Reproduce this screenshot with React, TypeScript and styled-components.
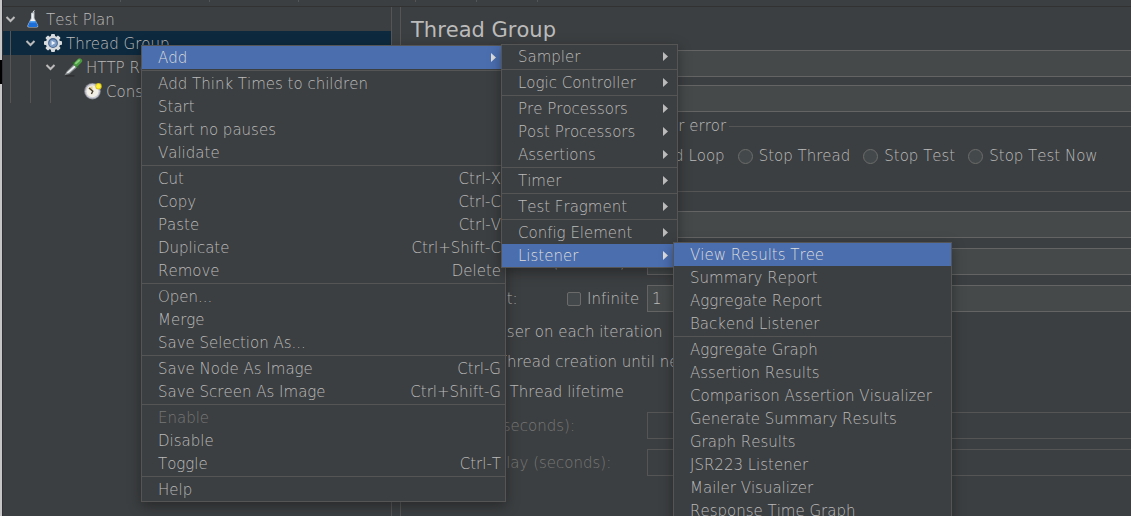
import React from 'react';
import styled, { createGlobalStyle, css } from 'styled-components';

const Global = createGlobalStyle`
  * { box-sizing: border-box; }
  body {
    margin: 0;
    background: #3c3f41;
    color: #bbbbbb;
    font-family: 'DejaVu Sans', sans-serif;
    font-weight: 200;
    font-size: 15px;
    line-height: 20px;
    font-kerning: none;
    font-variant-ligatures: none;
  }
  button, input { font: inherit; color: inherit; font-kerning: none; }
`;

const Page = styled.div`
  position: relative;
  display: flex;
  height: 100vh;
  overflow: hidden;
`;

const WindowEdge = styled.div`
  display: flex;
  flex-direction: column;
  flex: none;
  width: 3px;
  padding-top: 60px;
  background: #c6c6c6;
  border-right: 1px solid #2f3133;
`;

const EdgeMark = styled.span`
  height: 24px;
  background: #000000;
`;

const Frame = styled.div`
  flex: 1;
  min-width: 0;
  display: flex;
  flex-direction: column;
`;

const ToolBar = styled.div`
  display: flex;
  flex: none;
  height: 7px;
  border-bottom: 1px solid #323232;
`;

const ToolGap = styled.span<{ $width: number }>`
  width: ${(p) => p.$width}px;
  height: 2px;
  border-right: 1px solid #555555;
`;

const Split = styled.div`
  flex: 1;
  min-height: 0;
  display: flex;
`;

const TreePane = styled.nav`
  flex: none;
  width: 389px;
  border-right: 1px solid #555555;
`;

const TreeRow = styled.div<{ $selected?: boolean }>`
  display: flex;
  align-items: center;
  height: 24px;
  background: ${(p) => (p.$selected ? '#0d293e' : 'transparent')};
`;

const Guide = styled.span`
  width: 20px;
  height: 24px;
  padding-left: 7px;
  &::before {
    content: '';
    display: block;
    width: 1px;
    height: 24px;
    background: #555555;
  }
`;

const Cell = styled.span`
  display: flex;
  justify-content: center;
  width: 20px;
`;

const TreeLabel = styled.span`
  padding: 2px 0 0 3px;
  white-space: nowrap;
`;

const Editor = styled.main`
  flex: 1;
  min-width: 0;
  margin-left: 8px;
  padding: 9px 0 0 10px;
  border-left: 1px solid #555555;
  overflow: hidden;
`;

const Title = styled.h1`
  margin: 0;
  font-size: 21px;
  font-weight: 400;
  line-height: 28px;
`;

const Fields = styled.div`
  display: flex;
  flex-direction: column;
  gap: 8px;
  padding-top: 6px;
`;

const FieldRow = styled.label`
  display: flex;
  align-items: center;
  gap: 8px;
`;

const FieldName = styled.span<{ $width: number }>`
  flex: none;
  width: ${(p) => p.$width}px;
  white-space: nowrap;
`;

const TextInput = styled.input`
  flex: 1;
  min-width: 0;
  height: 27px;
  padding: 0 4px;
  background: #45494a;
  border: 1px solid #646464;
  border-right: 0;
  border-radius: 0;
  outline: none;
  &:disabled {
    background: #3c3f41;
    border-color: #555555;
  }
`;

const GroupTitle = styled.h2`
  display: flex;
  align-items: center;
  gap: 3px;
  margin: 0;
  padding-left: 14px;
  font-size: 15px;
  font-weight: 200;
  line-height: 20px;
  white-space: nowrap;
  &::after {
    content: '';
    flex: 1;
    height: 1px;
    background: #555555;
  }
`;

const ErrorGroup = styled.section`
  padding-top: 4px;
`;

const RadioRow = styled.div`
  display: flex;
  gap: 13px;
  padding: 10px 0 15px 16px;
`;

const Choice = styled.label`
  display: flex;
  align-items: center;
  gap: 6px;
  white-space: nowrap;
`;

const Radio = styled.input`
  appearance: none;
  width: 15px;
  height: 15px;
  margin: 0;
  border: 1px solid #6b6b6b;
  border-radius: 50%;
  background: #43494a;
`;

const Check = styled.input`
  appearance: none;
  width: 14px;
  height: 14px;
  margin: 0;
  border: 1px solid #6b6b6b;
  border-radius: 2px;
  background: #43494a;
`;

const Properties = styled.div`
  display: flex;
  flex-direction: column;
  gap: 10px;
  padding: 10px 0 0 16px;
`;

const PropRow = styled.div<{ $disabled?: boolean }>`
  display: flex;
  align-items: center;
  height: 27px;
  color: ${(p) => (p.$disabled ? '#777777' : 'inherit')};
`;

const PropName = styled.label<{ $width: number }>`
  flex: none;
  width: ${(p) => p.$width}px;
  white-space: nowrap;
`;

const CheckList = styled.div`
  display: flex;
  flex-direction: column;
  gap: 10px;
  padding-left: 3px;
`;

const LoopChoice = styled(Choice)`
  width: 80px;
`;

const menuSpot = {
  main: css`left: 141px; top: 45px; width: 365px;`,
  add: css`left: 501px; top: 44px; width: 177px;`,
  listener: css`left: 673px; top: 242px; width: 279px;`,
};

const MenuBox = styled.div<{ $spot: keyof typeof menuSpot }>`
  position: absolute;
  ${(p) => menuSpot[p.$spot]}
  background: #3c3f41;
  border: 1px solid #555555;
  box-shadow: 0 4px 12px rgba(0, 0, 0, 0.35);
`;

const MenuItem = styled.button<{ $active?: boolean }>`
  display: flex;
  align-items: center;
  justify-content: space-between;
  width: 100%;
  height: 23px;
  padding: 0 4px 0 16px;
  border: 0;
  text-align: left;
  white-space: nowrap;
  background: ${(p) => (p.$active ? '#4b6eaf' : 'transparent')};
  color: ${(p) => (p.$active ? '#dddddd' : '#bbbbbb')};
  &:disabled { color: #777777; }
`;

const Separator = styled.hr`
  height: 3px;
  margin: 0;
  border: solid transparent;
  border-width: 1px 0;
  background: #555555;
  background-clip: padding-box;
`;

const ArrowBox = styled.svg`
  width: 5px;
  height: 9px;
  margin-right: 5px;
`;

type Entry = { label: string; keys?: string; sub?: boolean; active?: boolean; disabled?: boolean } | null;

const mainMenu: Entry[] = [
  { label: 'Add', sub: true, active: true },
  null,
  { label: 'Add Think Times to children' },
  { label: 'Start' },
  { label: 'Start no pauses' },
  { label: 'Validate' },
  null,
  { label: 'Cut', keys: 'Ctrl-X' },
  { label: 'Copy', keys: 'Ctrl-C' },
  { label: 'Paste', keys: 'Ctrl-V' },
  { label: 'Duplicate', keys: 'Ctrl+Shift-C' },
  { label: 'Remove', keys: 'Delete' },
  null,
  { label: 'Open...' },
  { label: 'Merge' },
  { label: 'Save Selection As...' },
  null,
  { label: 'Save Node As Image', keys: 'Ctrl-G' },
  { label: 'Save Screen As Image', keys: 'Ctrl+Shift-G' },
  null,
  { label: 'Enable', disabled: true },
  { label: 'Disable' },
  { label: 'Toggle', keys: 'Ctrl-T' },
  null,
  { label: 'Help' },
];

const addMenu: Entry[] = [
  { label: 'Sampler', sub: true },
  null,
  { label: 'Logic Controller', sub: true },
  null,
  { label: 'Pre Processors', sub: true },
  { label: 'Post Processors', sub: true },
  { label: 'Assertions', sub: true },
  null,
  { label: 'Timer', sub: true },
  null,
  { label: 'Test Fragment', sub: true },
  null,
  { label: 'Config Element', sub: true },
  { label: 'Listener', sub: true, active: true },
];

const listenerMenu: Entry[] = [
  { label: 'View Results Tree', active: true },
  { label: 'Summary Report' },
  { label: 'Aggregate Report' },
  { label: 'Backend Listener' },
  null,
  { label: 'Aggregate Graph' },
  { label: 'Assertion Results' },
  { label: 'Comparison Assertion Visualizer' },
  { label: 'Generate Summary Results' },
  { label: 'Graph Results' },
  { label: 'JSR223 Listener' },
  { label: 'Mailer Visualizer' },
  { label: 'Response Time Graph' },
];

const Menu = ({ spot, entries }: { spot: keyof typeof menuSpot; entries: Entry[] }) => (
  <MenuBox $spot={spot} role="menu">
    {entries.map((e, i) =>
      e ? (
        <MenuItem key={i} type="button" role="menuitem" $active={e.active} disabled={e.disabled}>
          <span>{e.label}</span>
          {e.keys && <span>{e.keys}</span>}
          {e.sub && (
            <ArrowBox viewBox="0 0 5 9" aria-hidden="true">
              <path d="M0 0 L5 4.5 L0 9 Z" fill="currentColor" />
            </ArrowBox>
          )}
        </MenuItem>
      ) : (
        <Separator key={i} />
      ),
    )}
  </MenuBox>
);

const Chevron = () => (
  <Cell>
    <svg width="20" height="10" viewBox="0 0 20 10" aria-hidden="true">
      <path d="M3.5 3 L7.5 7 L11.5 3" fill="none" stroke="#bbbbbb" strokeWidth="2" />
    </svg>
  </Cell>
);

const Flask = () => (
  <svg width="20" height="20" viewBox="0 0 20 20" aria-hidden="true">
    <path d="M8 4 L11.5 2.5 V9 L15.2 16.5 Q15.7 18.5 13.7 18.5 H5.8 Q3.8 18.5 4.4 16.5 L8 9 Z" fill="#b4bcc4" />
    <path d="M8.8 4.5 H10.6 V9.5 L12.8 13 H6.8 L8.8 9.5 Z" fill="#f1f4f7" />
    <path d="M7 12 H12.6 L14.6 16.2 Q15 18 13.5 18 H6.2 Q4.6 18 5.2 16.2 Z" fill="#1c6fd8" />
    <path d="M7.2 12 H12.4 L13 13.4 H6.6 Z" fill="#5aa5f2" />
    <path d="M10 3 L11.4 1.4" stroke="#dfe3e6" strokeWidth="1" />
  </svg>
);

const Gear = () => (
  <svg width="20" height="20" viewBox="0 0 20 20" aria-hidden="true">
    <g fill="#d8dbde">
      {[0, 45, 90, 135].map((a) => (
        <rect key={a} x="8" y="1" width="4" height="18" rx="1" transform={`rotate(${a} 10 10)`} />
      ))}
      <circle cx="10" cy="10" r="7.2" />
    </g>
    <circle cx="10" cy="10" r="4.9" fill="#44648f" />
    <circle cx="10" cy="10.2" r="3.8" fill="#7d9dc6" />
    <path d="M8.6 7.8 L12.4 10 L8.6 12.2 Z" fill="#eef3f9" />
  </svg>
);

const Dropper = () => (
  <svg width="20" height="20" viewBox="0 0 20 20" aria-hidden="true">
    <path d="M3 18.8 H11" stroke="#2b2d2f" strokeWidth="1.2" strokeLinecap="round" />
    <path d="M1.5 18.2 L3.6 14.4 L11 7 L14.2 10.2 L6.4 17 Z" fill="#85898c" />
    <path d="M3.2 16.6 L4.8 14.6 L11.4 8.4 L12.8 9.8 L6 15.8 Z" fill="#eceff0" />
    <path d="M10.4 5.8 L15.2 10.6" stroke="#2c5a28" strokeWidth="2" strokeLinecap="round" />
    <path d="M13.4 7 L16.6 3.8" stroke="#4a9a42" strokeWidth="5" strokeLinecap="round" />
    <path d="M13 6.2 L16 3.4" stroke="#86cc7a" strokeWidth="2" strokeLinecap="round" />
  </svg>
);

const Clock = () => (
  <svg width="20" height="20" viewBox="0 0 20 20" aria-hidden="true">
    <circle cx="9.5" cy="10.2" r="8.3" fill="#85878f" />
    <circle cx="9.5" cy="10.2" r="7.4" fill="#c9c9d4" />
    <circle cx="9.5" cy="10.2" r="6" fill="#f2efe6" />
    <path d="M9.5 10.5 L5.5 7.5 A5 5 0 0 1 9.5 5.2 Z" fill="#e3cf8d" />
    <path d="M6 7 L9.8 10.2 L8.4 13" fill="none" stroke="#4a3f28" strokeWidth="1.4" />
    <circle cx="15.5" cy="5.2" r="3.2" fill="#d9c520" />
    <circle cx="15.5" cy="5.2" r="2.2" fill="#fff13a" />
  </svg>
);

export default function App() {
  return (
    <>
      <Global />
      <Page>
        <WindowEdge>
          <EdgeMark />
        </WindowEdge>
        <Frame>
          <ToolBar>
            <ToolGap $width={118} />
            <ToolGap $width={89} />
            <ToolGap $width={89} />
            <ToolGap $width={117} />
            <ToolGap $width={61} />
            <ToolGap $width={61} />
          </ToolBar>
          <Split>
            <TreePane>
              <TreeRow>
                <Chevron />
                <Cell><Flask /></Cell>
                <TreeLabel>Test Plan</TreeLabel>
              </TreeRow>
              <TreeRow $selected>
                <Guide />
                <Chevron />
                <Cell><Gear /></Cell>
                <TreeLabel>Thread Group</TreeLabel>
              </TreeRow>
              <TreeRow>
                <Guide />
                <Guide />
                <Chevron />
                <Cell><Dropper /></Cell>
                <TreeLabel>HTTP Request</TreeLabel>
              </TreeRow>
              <TreeRow>
                <Guide />
                <Guide />
                <Guide />
                <Cell />
                <Cell><Clock /></Cell>
                <TreeLabel>Constant Timer</TreeLabel>
              </TreeRow>
            </TreePane>
            <Editor>
              <Title>Thread Group</Title>
              <Fields>
                <FieldRow>
                  <FieldName $width={80}>Name:</FieldName>
                  <TextInput type="text" />
                </FieldRow>
                <FieldRow>
                  <FieldName $width={80}>Comments:</FieldName>
                  <TextInput type="text" />
                </FieldRow>
              </Fields>
              <ErrorGroup>
                <GroupTitle>Action to be taken after a Sampler error</GroupTitle>
                <RadioRow>
                  <Choice><Radio type="radio" name="onError" />Continue</Choice>
                  <Choice><Radio type="radio" name="onError" />Start Next Thread Loop</Choice>
                  <Choice><Radio type="radio" name="onError" />Stop Thread</Choice>
                  <Choice><Radio type="radio" name="onError" />Stop Test</Choice>
                  <Choice><Radio type="radio" name="onError" />Stop Test Now</Choice>
                </RadioRow>
              </ErrorGroup>
              <section>
                <GroupTitle>Thread Properties</GroupTitle>
                <Properties>
                  <PropRow>
                    <PropName htmlFor="threads" $width={220}>Number of Threads (users):</PropName>
                    <TextInput id="threads" type="text" />
                  </PropRow>
                  <PropRow>
                    <PropName htmlFor="ramp" $width={220}>Ramp-up period (seconds):</PropName>
                    <TextInput id="ramp" type="text" />
                  </PropRow>
                  <PropRow>
                    <PropName htmlFor="loops" $width={140}>Loop Count:</PropName>
                    <LoopChoice><Check type="checkbox" />Infinite</LoopChoice>
                    <TextInput id="loops" type="text" defaultValue="1" />
                  </PropRow>
                  <CheckList>
                    <Choice><Check type="checkbox" />Same user on each iteration</Choice>
                    <Choice><Check type="checkbox" />Delay Thread creation until needed</Choice>
                    <Choice><Check type="checkbox" />Specify Thread lifetime</Choice>
                  </CheckList>
                  <PropRow $disabled>
                    <PropName htmlFor="duration" $width={220}>Duration (seconds):</PropName>
                    <TextInput id="duration" type="text" disabled />
                  </PropRow>
                  <PropRow $disabled>
                    <PropName htmlFor="delay" $width={220}>Startup delay (seconds):</PropName>
                    <TextInput id="delay" type="text" disabled />
                  </PropRow>
                </Properties>
              </section>
            </Editor>
          </Split>
        </Frame>
        <Menu spot="main" entries={mainMenu} />
        <Menu spot="add" entries={addMenu} />
        <Menu spot="listener" entries={listenerMenu} />
      </Page>
    </>
  );
}
